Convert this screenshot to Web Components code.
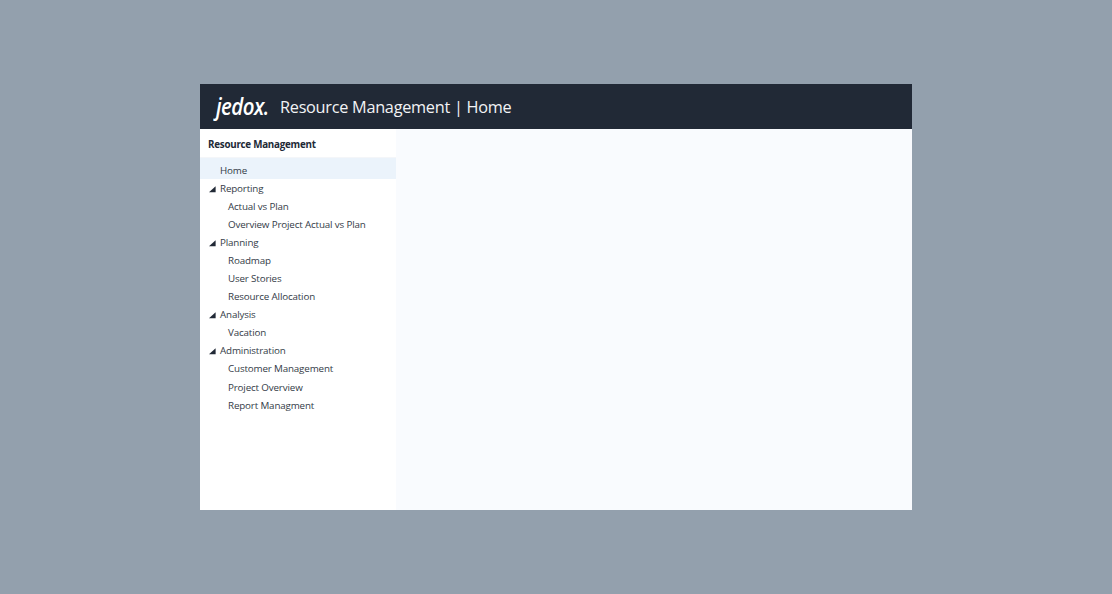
<!DOCTYPE html>
<html>
<head>
<meta charset="utf-8">
<title>Resource Management | Home</title>
<style>
  html, body { margin: 0; height: 100%; }
  body { background: #93a0ad; font-family: "Open Sans", "Liberation Sans", sans-serif; }
</style>
</head>
<body>
<app-shell>
  <app-header slot="header" title="Resource Management | Home"></app-header>
  <side-nav slot="nav" heading="Resource Management">
    <nav-item active>Home</nav-item>
    <nav-item group>Reporting</nav-item>
    <nav-item>Actual vs Plan</nav-item>
    <nav-item>Overview Project Actual vs Plan</nav-item>
    <nav-item group>Planning</nav-item>
    <nav-item>Roadmap</nav-item>
    <nav-item>User Stories</nav-item>
    <nav-item>Resource Allocation</nav-item>
    <nav-item group>Analysis</nav-item>
    <nav-item>Vacation</nav-item>
    <nav-item group>Administration</nav-item>
    <nav-item>Customer Management</nav-item>
    <nav-item>Project Overview</nav-item>
    <nav-item>Report Managment</nav-item>
  </side-nav>
</app-shell>
<script>
// outer frame, centred on the grey page
class AppShell extends HTMLElement {
  constructor() {
    super();
    this.attachShadow({ mode: 'open' });
    this.shadowRoot.innerHTML = `
      <style>
        :host { display: flex; height: 594px; align-items: flex-start; justify-content: center; padding-top: 84px; box-sizing: border-box; }
        .window { width: 712px; height: 426px; display: flex; flex-direction: column; background: #f9fbfe; }
        .body { flex: 1; display: flex; min-height: 0; }
      </style>
      <div class="window">
        <slot name="header"></slot>
        <div class="body">
          <slot name="nav"></slot>
        </div>
      </div>`;
  }
}

class AppHeader extends HTMLElement {
  constructor() {
    super();
    this.attachShadow({ mode: 'open' });
    this.shadowRoot.innerHTML = `
      <style>
        :host { display: flex; height: 45px; flex: none; align-items: center; background: #212936; color: #fff; padding-left: 16px; }
        .logo { width: 54px; margin-right: 10px; font: italic 600 23px/1 "Open Sans", sans-serif; letter-spacing: -0.6px; white-space: nowrap; transform: scaleX(0.89); transform-origin: left center; }
        .title { font-size: 16.3px; letter-spacing: -0.28px; white-space: nowrap; color: #f2f3f5; }
      </style>
      <span class="logo">jedox.</span>
      <span class="title"></span>`;
    this.shadowRoot.querySelector('.title').textContent = this.getAttribute('title');
  }
}

class SideNav extends HTMLElement {
  constructor() {
    super();
    this.attachShadow({ mode: 'open' });
    this.shadowRoot.innerHTML = `
      <style>
        :host { display: block; width: 196px; flex: none; background: #fff; box-sizing: border-box; height: 381px; }
        h2 { margin: 0; height: 29px; padding-left: 8px; box-sizing: border-box; font-size: 9.8px; letter-spacing: -0.25px; line-height: 31px; font-weight: 700; color: #212936; border-bottom: 1px solid #f4f6f9; }
        .list { display: flex; flex-direction: column; }
      </style>
      <h2></h2>
      <div class="list"><slot></slot></div>`;
    this.shadowRoot.querySelector('h2').textContent = this.getAttribute('heading');
  }
}

class NavItem extends HTMLElement {
  constructor() {
    super();
    this.attachShadow({ mode: 'open' });
    this.shadowRoot.innerHTML = `
      <style>
        :host { display: flex; align-items: center; height: 18.08px; box-sizing: border-box; padding-top: 1.04px; padding-left: 28px; font-size: 9.8px; letter-spacing: -0.15px; color: #333b47; white-space: nowrap; position: relative; }
        :host([group]), :host([active]) { padding-left: 20px; }
        :host([active]) { background: #ebf3fb; height: 20.65px; padding-top: 5px; }
        svg { display: none; position: absolute; left: 8px; top: 6px; width: 8px; height: 8px; }
        :host([group]) svg { display: block; }
      </style>
      <svg viewBox="0 0 8 8"><path d="M7.6 1.2V7.2H1z" fill="#212936"/></svg>
      <slot></slot>`;
  }
}

customElements.define('app-shell', AppShell);
customElements.define('app-header', AppHeader);
customElements.define('side-nav', SideNav);
customElements.define('nav-item', NavItem);
</script>
</body>
</html>
